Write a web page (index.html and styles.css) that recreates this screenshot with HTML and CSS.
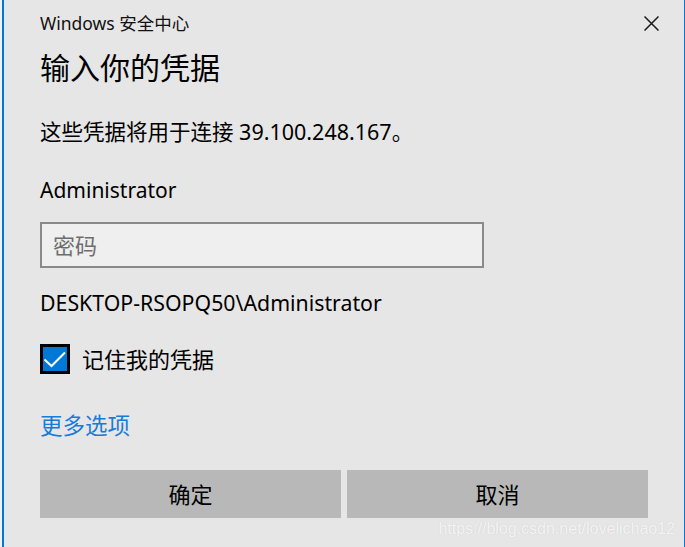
FILE: index.html
```html
<!DOCTYPE html>
<html lang="zh-CN">
<head>
<meta charset="utf-8">
<title>Windows 安全中心</title>
<link rel="stylesheet" href="styles.css">
</head>
<body>
<div class="page">
  <div class="dialog">
    <div class="titlebar">
      <span class="app-title">Windows 安全中心</span>
      <button class="close" aria-label="关闭">
        <svg width="15" height="15" viewBox="0 0 15 15"><path d="M0.5 0.5 L14.5 14.5 M14.5 0.5 L0.5 14.5" stroke="#1a1a1a" stroke-width="1.5" fill="none"/></svg>
      </button>
    </div>
    <h1 class="heading">输入你的凭据</h1>
    <p class="connect">这些凭据将用于连接 39.100.248.167。</p>
    <div class="user">Administrator</div>
    <div class="input">密码</div>
    <div class="account">DESKTOP-RSOPQ50\Administrator</div>
    <label class="remember">
      <span class="checkbox">
        <svg width="24" height="24" viewBox="0 0 24 24"><path d="M1.5 12.5 L8.5 19 L22 5.5" stroke="#fff" stroke-width="2" fill="none"/></svg>
      </span>
      <span class="remember-text">记住我的凭据</span>
    </label>
    <a class="more" href="#">更多选项</a>
    <div class="buttons">
      <div class="btn">确定</div>
      <div class="btn">取消</div>
    </div>
    <div class="watermark">https://blog.csdn.net/lovelichao12</div>
  </div>
</div>
</body>
</html>
```
FILE: styles.css
```css
html, body {
  margin: 0;
  padding: 0;
}
body {
  width: 685px;
  height: 547px;
  overflow: hidden;
  background: #f2f2f2;
  font-family: "Noto Sans", "Noto Sans CJK SC", sans-serif;
  color: #000;
}
.page {
  padding-left: 2px;
  height: 547px;
}
.dialog {
  position: relative;
  box-sizing: border-box;
  width: 683px;
  height: 547px;
  background: #e6e6e6;
  border-left: 2px solid #0078d7;
  border-right: 1px solid #0078d7;
  padding: 0 36px;
  display: flex;
  flex-direction: column;
}
.titlebar {
  height: 45px;
  display: flex;
  align-items: center;
  justify-content: space-between;
}
.app-title {
  font-size: 17.5px;
  color: #111;
}
.close {
  border: 0;
  background: none;
  padding: 0;
  width: 15px;
  height: 15px;
  margin-right: -11px;
  margin-top: 1px;
  display: block;
}
.close svg { display: block; }
.heading {
  margin: 0;
  height: 45px;
  line-height: 45px;
  font-size: 30px;
  font-weight: normal;
}
.connect {
  margin: 22px 0 0;
  height: 40px;
  line-height: 40px;
  font-size: 21.5px;
}
.user {
  margin-top: 18px;
  height: 40px;
  line-height: 40px;
  font-size: 21px;
}
.input {
  margin-top: 12px;
  box-sizing: border-box;
  width: 444px;
  height: 46px;
  border: 2px solid #8a8a8a;
  background: #efefef;
  padding-left: 11px;
  line-height: 42px;
  font-size: 22px;
  color: #6e6e6e;
}
.account {
  margin-top: 14px;
  height: 41px;
  line-height: 41px;
  font-size: 21.3px;
}
.remember {
  margin-top: 21px;
  height: 30px;
  display: flex;
  align-items: center;
  gap: 12px;
}
.checkbox {
  box-sizing: border-box;
  width: 30px;
  height: 30px;
  border: 3px solid #000;
  background: #0078d7;
  display: flex;
  align-items: center;
  justify-content: center;
}
.checkbox svg { display: block; }
.remember-text {
  font-size: 22px;
  line-height: 30px;
}
.more {
  margin-top: 32px;
  height: 40px;
  line-height: 40px;
  font-size: 22.5px;
  color: #1a7bd6;
  text-decoration: none;
  align-self: flex-start;
}
.buttons {
  margin-top: 24px;
  display: flex;
  gap: 6px;
}
.btn {
  flex: 1;
  height: 48px;
  line-height: 48px;
  background: #b8b8b8;
  text-align: center;
  font-size: 22px;
}
.watermark {
  position: absolute;
  right: 9px;
  bottom: 9px;
  font-family: "Liberation Sans", sans-serif;
  font-size: 16px;
  color: rgba(255, 255, 255, 0.8);
  text-shadow: 0 0 1px rgba(150, 150, 150, 0.4);
}
```
